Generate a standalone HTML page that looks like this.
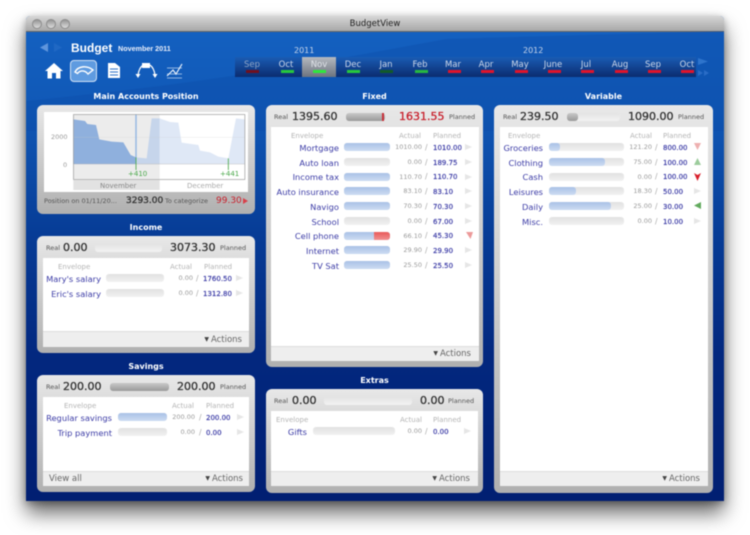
<!DOCTYPE html>
<html><head><meta charset="utf-8"><style>
html,body{margin:0;padding:0;background:#fff}
body{width:750px;height:535px;position:relative;overflow:hidden;font-family:"DejaVu Sans","Liberation Sans",sans-serif}
#all{position:absolute;left:0;top:0;width:750px;height:535px;filter:blur(.4px)}
.a,.a *{position:absolute;white-space:nowrap}
.win{left:26px;top:16px;width:698px;height:485px;box-shadow:0 12px 20px rgba(0,0,0,.6),0 2px 8px rgba(0,0,0,.3);border-radius:4px 4px 0 0;overflow:hidden;background:linear-gradient(180deg,#1562c2 0,#1058b6 20%,#073c96 45%,#03287f 70%,#011f72 100%)}
.tb{left:0;top:0;width:698px;height:15px;background:linear-gradient(#d6d6d6,#a8a8a8);border-bottom:1px solid #666}
.dot{width:10px;height:10px;border-radius:50%;background:linear-gradient(#969696,#dcdcdc);border:1px solid #8c8c8c;box-sizing:border-box;top:19px}
.ttl{left:0;width:750px;top:19px;text-align:center;font-size:8.5px;color:#222;line-height:11px}
.h{color:#fff;font-weight:bold;font-size:8px;line-height:11px;text-align:center}
.p{background:linear-gradient(#e8e8e8,#b0b0b0);border-radius:6px}
.w{background:#fff}
.bar{background:#eee;border-top:1px solid #ddd;color:#666;font-size:8.5px;line-height:14px}
.bar i{font-style:normal;font-size:6px;color:#444;line-height:14px}
.real{font-size:6.5px;color:#555;line-height:10px}
.big{font-size:11px;color:#333;line-height:14px;-webkit-text-stroke:.3px currentColor}
.prog{height:8px;border-radius:3px;background:linear-gradient(#e4e4e4,#f2f2f2)}
.dark{background:linear-gradient(#c8c8c8,#9a9a9a)}
.hd{font-size:7px;color:#b4b4b4;line-height:10px}
.r{height:0;left:0;width:750px}
.l{font-size:8.3px;line-height:11px;color:#3c3ca6;text-align:right;top:-4.500px}
.t{height:8px;top:-4px;border-radius:3px;background:linear-gradient(#e2e2e2,#f2f2f2)}
.f{height:8px;left:0;top:0;border-radius:3px;background:linear-gradient(#a9c1e6,#cddcf2)}
.v{font-size:6.500px;color:#999;line-height:10px;text-align:right;top:-5px;width:40px}
.s{font-size:7.500px;color:#aaa;line-height:10px;top:-4.500px}
.q{font-size:7px;color:#3c3ca6;line-height:10px;top:-4.500px;-webkit-text-stroke:.2px currentColor}
.g{width:0;height:0;top:-3px;border-left:7px solid #e6e6e6;border-top:3px solid transparent;border-bottom:3px solid transparent}
.m{font-size:8.500px;line-height:11px;color:#cdd8ea;width:34px;text-align:center;top:60px}
.mk{width:13px;height:3px;top:70px;background:#e0142a}
.fx .l{left:240px;width:99px}.fx .t{left:344px;width:46px}.fx .v{left:382px}.fx .s{left:425px}.fx .q{left:433px}.fx .g{left:465px}
.vr .l{left:470px;width:73px}.vr .t{left:549px;width:75px}.vr .v{left:612px}.vr .s{left:655px}.vr .q{left:663px}.vr .g{left:694px}
.in .l{left:30px;width:71px}.in .t{left:106px;width:58px}.in .v{left:153px}.in .s{left:196px}.in .q{left:203px}.in .g{left:236px}
.sv .l{left:30px;width:82px}.sv .t{left:118px;width:49px}.sv .v{left:155px}.sv .s{left:199px}.sv .q{left:206px}.sv .g{left:237px}
.ex .l{left:260px;width:47px}.ex .t{left:313px;width:82px}.ex .v{left:382px}.ex .s{left:425px}.ex .q{left:433px}.ex .g{left:464px}
</style></head><body><div id="all" class="a">
<div class="win"><div class="tb"></div>
<svg style="left:0;top:15px" width="698" height="100"><path d="M0 70 C200 50 300 30 420 8 L698 0 L698 100 L0 100Z" fill="#0b4aa6" opacity=".35"/></svg>
</div>
<div class="dot" style="left:32px"></div><div class="dot" style="left:46px"></div><div class="dot" style="left:60px"></div>
<div class="ttl">BudgetView</div>

<svg style="left:38px;top:42px" width="26" height="11"><path d="M2 5.500L10 1V10Z" fill="#5f95dc"/><path d="M24 5.500L16 1V10Z" fill="#2068c4"/></svg>
<div style="left:71px;top:41px;font-size:12px;font-weight:bold;color:#fff;line-height:14px;font-family:'Liberation Sans',sans-serif">Budget</div>
<div style="left:118px;top:44px;font-size:7.200px;font-weight:bold;color:#e8eefa;line-height:10px;font-family:'Liberation Sans',sans-serif">November 2011</div>

<svg style="left:40px;top:58px" width="160" height="26">
<path d="M5 13L14 5L23 13H20.500V20.500H16V15H12V20.500H7.500V13Z" fill="#fff"/>
<rect x="30.500" y="2.500" width="26" height="21" rx="3.500" fill="#5f9be0" stroke="#cfe0f5"/>
<path d="M35 14C38 8 47 7 53 12L48 16C45 12 40 12 37.500 15.500Z" fill="none" stroke="#fff" stroke-width="1.400"/>
<path d="M68 5H75L80 9V20H68Z" fill="#fff"/><path d="M70 11H78M70 14H78M70 17H78" stroke="#2a70c8" stroke-width="1"/>
<path d="M98 17Q99 10 103 7M110 7Q114 10 115 17" fill="none" stroke="#fff" stroke-width="1.200"/><rect x="102" y="5" width="8" height="5" fill="#fff"/><path d="M95.500 16h5l-2.500 4zM112.500 16h5l-2.500 4z" fill="#fff"/>
<path d="M127 20H142M127 10H142M127 16H142" stroke="#bcd2f0" stroke-width=".8"/><path d="M127 18L133 12L136 16L142 6" fill="none" stroke="#e6effa" stroke-width="1.200"/>
</svg>

<div style="left:294px;top:46px;font-size:8px;color:#c7d5ea;line-height:10px">2011</div>
<div style="left:523px;top:46px;font-size:8px;color:#c7d5ea;line-height:10px">2012</div>
<div style="left:235px;top:57px;width:461px;height:20px;background:linear-gradient(#1a5cb4,#0b2c70)"></div>
<div style="left:302px;top:57px;width:34px;height:20px;background:linear-gradient(#b5b9c0,#6d747f)"></div>
<div class="m" style="left:235px;color:#8fa5c6">Sep</div><div class="mk" style="left:246px;background:#70101f"></div>
<div class="m" style="left:269px">Oct</div><div class="mk" style="left:281px;background:#28c83c"></div>
<div class="m" style="left:302px;color:#dfe3e8">Nov</div><div class="mk" style="left:313px;background:#2ee83c"></div>
<div class="m" style="left:336px">Dec</div><div class="mk" style="left:347px;background:#28c83c"></div>
<div class="m" style="left:369px">Jan</div><div class="mk" style="left:380px;background:#125a28"></div>
<div class="m" style="left:403px">Feb</div><div class="mk" style="left:415px;background:#28b840"></div>
<div class="m" style="left:436px">Mar</div><div class="mk" style="left:448px"></div>
<div class="m" style="left:469px">Apr</div><div class="mk" style="left:481px"></div>
<div class="m" style="left:503px">May</div><div class="mk" style="left:515px"></div>
<div class="m" style="left:536px">June</div><div class="mk" style="left:548px"></div>
<div class="m" style="left:569px">Jul</div><div class="mk" style="left:581px"></div>
<div class="m" style="left:603px">Aug</div><div class="mk" style="left:615px"></div>
<div class="m" style="left:636px">Sep</div><div class="mk" style="left:648px"></div>
<div class="m" style="left:670px">Oct</div><div class="mk" style="left:681px"></div>
<svg style="left:698px;top:57px" width="14" height="20"><path d="M0 1L10 4.500L0 8Z" fill="#2e74cc"/><path d="M0 13L5 16L0 19ZM6 13L11 16L6 19Z" fill="#2a6cc6"/></svg>

<div class="h" style="left:37px;top:91px;width:218px">Main Accounts Position</div>
<div class="h" style="left:266px;top:91px;width:217px">Fixed</div>
<div class="h" style="left:494px;top:91px;width:219px">Variable</div>
<div class="h" style="left:37px;top:222px;width:218px">Income</div>
<div class="h" style="left:37px;top:361px;width:218px">Savings</div>
<div class="h" style="left:266px;top:375px;width:217px">Extras</div>

<!-- Main panel -->
<div class="p" style="left:37px;top:105px;width:218px;height:109px"></div>
<div class="w" style="left:44px;top:112px;width:204px;height:80px"></div>
<svg style="left:30px;top:100px" width="235" height="130" viewBox="0 0 705 390">
<rect x="130" y="240" width="259" height="30" fill="#e2e2e2"/>
<rect x="130" y="43" width="259" height="195" fill="#ececec"/>
<path d="M389 192V55L420 66L445 68L455 128L505 135L510 152L540 157L565 170L595 175L618 55L645 58V192Z" fill="#dfe8f6"/>
<path d="M318 192V172L350 175L365 55L389 55V192Z" fill="#c6d5eb"/>
<path d="M130 192V58L165 63L172 72L198 75L208 118L245 125L280 127L302 165L318 172V192Z" fill="#8fb0dd"/>
<path d="M130 112H645" stroke="#ccc" stroke-width="1" opacity=".6"/><path d="M130 192H645" stroke="#aaa" stroke-width="1"/>
<rect x="316" y="43" width="4" height="130" fill="#8fb4e2"/>
<rect x="130.500" y="43.500" width="514" height="195" fill="none" stroke="#999" stroke-width="2"/>
<path d="M318 172V210M595 175V210" stroke="#4aa84a" stroke-width="2.500"/>
</svg>
<div class="hd" style="left:51px;top:132px;color:#999;font-size:6.500px">2000</div><div class="hd" style="left:63px;top:160px;color:#999;font-size:6.500px">0</div>
<div style="left:128px;top:169px;font-size:7px;color:#4aa84a;line-height:10px">+410</div>
<div style="left:220px;top:169px;font-size:7px;color:#4aa84a;line-height:10px">+441</div>
<div style="left:100px;top:181px;font-size:7px;color:#888;line-height:10px">November</div>
<div style="left:187px;top:181px;font-size:7px;color:#aaa;line-height:10px">December</div>
<div style="left:44px;top:196px;font-size:6.500px;color:#555;line-height:10px">Position on 01/11/20...</div>
<div class="big" style="left:126px;top:195px;font-size:9px;line-height:12px">3293.00</div>
<div style="left:165px;top:196px;font-size:6.500px;color:#555;line-height:10px">To categorize</div>
<div style="left:216px;top:195px;font-size:9px;color:#c8202c;line-height:12px">99.30</div>
<svg style="left:243px;top:198px" width="6" height="6"><path d="M0 0L5 3L0 6Z" fill="#d8404a"/></svg>

<!-- Income -->
<div class="p" style="left:37px;top:236px;width:218px;height:117px"></div>
<div class="real" style="left:46px;top:243px">Real</div><div class="big" style="left:63px;top:241px">0.00</div>
<div class="prog" style="left:95px;top:244px;width:67px"></div>
<div class="big" style="left:170px;top:241px">3073.30</div><div class="real" style="left:220px;top:243px">Planned</div>
<div class="w" style="left:43px;top:258px;width:206px;height:88px"></div>
<div class="hd" style="left:58px;top:262px">Envelope</div><div class="hd" style="left:170px;top:262px">Actual</div><div class="hd" style="left:204px;top:262px">Planned</div>
<div class="in">
<div class="r" style="top:278px"><div class="l">Mary's salary</div><div class="t"></div><div class="v">0.00</div><div class="s">/</div><div class="q">1760.50</div><div class="g"></div></div>
<div class="r" style="top:293px"><div class="l">Eric's salary</div><div class="t"></div><div class="v">0.00</div><div class="s">/</div><div class="q">1312.80</div><div class="g"></div></div>
</div>
<div class="bar" style="left:43px;top:331px;width:206px;height:15px"><i style="right:40px;top:1px">▼</i><span style="right:7px;top:1px">Actions</span></div>

<!-- Savings -->
<div class="p" style="left:37px;top:375px;width:218px;height:117px"></div>
<div class="real" style="left:46px;top:382px">Real</div><div class="big" style="left:63px;top:380px">200.00</div>
<div class="prog dark" style="left:110px;top:383px;width:59px"></div>
<div class="big" style="left:177px;top:380px">200.00</div><div class="real" style="left:220px;top:382px">Planned</div>
<div class="w" style="left:43px;top:397px;width:206px;height:88px"></div>
<div class="hd" style="left:64px;top:401px">Envelope</div><div class="hd" style="left:172px;top:401px">Actual</div><div class="hd" style="left:206px;top:401px">Planned</div>
<div class="sv">
<div class="r" style="top:417px"><div class="l">Regular savings</div><div class="t"><div class="f" style="width:49px"></div></div><div class="v">200.00</div><div class="s">/</div><div class="q">200.00</div><div class="g"></div></div>
<div class="r" style="top:432px"><div class="l">Trip payment</div><div class="t"></div><div class="v">0.00</div><div class="s">/</div><div class="q">0.00</div><div class="g"></div></div>
</div>
<div class="bar" style="left:43px;top:471px;width:206px;height:14px"><span style="left:6px;top:0">View all</span><i style="right:39px;top:0">▼</i><span style="right:6px;top:0">Actions</span></div>

<!-- Fixed -->
<div class="p" style="left:266px;top:105px;width:217px;height:262px"></div>
<div class="real" style="left:274px;top:112px">Real</div><div class="big" style="left:292px;top:110px">1395.60</div>
<div class="prog dark" style="left:346px;top:113px;width:39px"><div style="right:1px;top:0;width:2px;height:8px;background:#c8303a"></div></div>
<div class="big" style="left:399px;top:110px;color:#c81e2a">1631.55</div><div class="real" style="left:449px;top:112px">Planned</div>
<div class="w" style="left:271px;top:127px;width:208px;height:233px"></div>
<div class="hd" style="left:291px;top:131px">Envelope</div><div class="hd" style="left:399px;top:131px">Actual</div><div class="hd" style="left:433px;top:131px">Planned</div>
<div class="fx">
<div class="r" style="top:147px"><div class="l">Mortgage</div><div class="t"><div class="f" style="width:46px"></div></div><div class="v">1010.00</div><div class="s">/</div><div class="q">1010.00</div><div class="g"></div></div>
<div class="r" style="top:162px"><div class="l">Auto loan</div><div class="t"></div><div class="v">0.00</div><div class="s">/</div><div class="q">189.75</div><div class="g"></div></div>
<div class="r" style="top:176.500px"><div class="l">Income tax</div><div class="t"><div class="f" style="width:46px"></div></div><div class="v">110.70</div><div class="s">/</div><div class="q">110.70</div><div class="g"></div></div>
<div class="r" style="top:191px"><div class="l">Auto insurance</div><div class="t"><div class="f" style="width:46px"></div></div><div class="v">83.10</div><div class="s">/</div><div class="q">83.10</div><div class="g"></div></div>
<div class="r" style="top:206px"><div class="l">Navigo</div><div class="t"><div class="f" style="width:46px"></div></div><div class="v">70.30</div><div class="s">/</div><div class="q">70.30</div><div class="g"></div></div>
<div class="r" style="top:221px"><div class="l">School</div><div class="t"></div><div class="v">0.00</div><div class="s">/</div><div class="q">67.00</div><div class="g"></div></div>
<div class="r" style="top:235.500px"><div class="l">Cell phone</div><div class="t"><div class="f" style="width:46px"></div><div style="left:30px;top:0;width:16px;height:8px;border-radius:0 3px 3px 0;background:linear-gradient(#e85a5a,#f09090)"></div></div><div class="v">66.10</div><div class="s">/</div><div class="q">45.30</div><svg style="left:466px;top:-4px" width="7" height="7"><path d="M0 0H7L4.500 7Z" fill="#ec9a9a"/></svg></div>
<div class="r" style="top:250px"><div class="l">Internet</div><div class="t"><div class="f" style="width:46px"></div></div><div class="v">29.90</div><div class="s">/</div><div class="q">29.90</div><div class="g"></div></div>
<div class="r" style="top:265px"><div class="l">TV Sat</div><div class="t"><div class="f" style="width:46px"></div></div><div class="v">25.50</div><div class="s">/</div><div class="q">25.50</div><div class="g"></div></div>
</div>
<div class="bar" style="left:271px;top:346px;width:208px;height:14px"><i style="right:41px;top:0">▼</i><span style="right:8px;top:0">Actions</span></div>

<!-- Extras -->
<div class="p" style="left:266px;top:389px;width:217px;height:104px"></div>
<div class="real" style="left:274px;top:396px">Real</div><div class="big" style="left:292px;top:394px">0.00</div>
<div class="prog" style="left:324px;top:397px;width:88px"></div>
<div class="big" style="left:420px;top:394px">0.00</div><div class="real" style="left:448px;top:396px">Planned</div>
<div class="w" style="left:271px;top:411px;width:207px;height:75px"></div>
<div class="hd" style="left:276px;top:415px">Envelope</div><div class="hd" style="left:400px;top:415px">Actual</div><div class="hd" style="left:433px;top:415px">Planned</div>
<div class="ex">
<div class="r" style="top:431px"><div class="l">Gifts</div><div class="t"></div><div class="v">0.00</div><div class="s">/</div><div class="q">0.00</div><div class="g"></div></div>
</div>
<div class="bar" style="left:271px;top:471px;width:207px;height:14px"><i style="right:41px;top:0">▼</i><span style="right:8px;top:0">Actions</span></div>

<!-- Variable -->
<div class="p" style="left:494px;top:105px;width:219px;height:388px"></div>
<div class="real" style="left:503px;top:112px">Real</div><div class="big" style="left:520px;top:110px">239.50</div>
<div class="prog" style="left:567px;top:113px;width:53px"><div class="dark" style="left:0;top:0;width:11px;height:8px;border-radius:3px"></div></div>
<div class="big" style="left:628px;top:110px">1090.00</div><div class="real" style="left:678px;top:112px">Planned</div>
<div class="w" style="left:500px;top:127px;width:208px;height:359px"></div>
<div class="hd" style="left:508px;top:131px">Envelope</div><div class="hd" style="left:630px;top:131px">Actual</div><div class="hd" style="left:663px;top:131px">Planned</div>
<div class="vr">
<div class="r" style="top:147px"><div class="l">Groceries</div><div class="t"><div class="f" style="width:11px"></div></div><div class="v">121.20</div><div class="s">/</div><div class="q">800.00</div><svg style="left:694px;top:-4px" width="7" height="7"><path d="M0 0H7L3.500 7Z" fill="#eeb0b0"/></svg></div>
<div class="r" style="top:162px"><div class="l">Clothing</div><div class="t"><div class="f" style="width:56px"></div></div><div class="v">75.00</div><div class="s">/</div><div class="q">100.00</div><svg style="left:694px;top:-4px" width="7" height="7"><path d="M3.500 0L7 7H0Z" fill="#9ccc9c"/></svg></div>
<div class="r" style="top:176.500px"><div class="l">Cash</div><div class="t"></div><div class="v">0.00</div><div class="s">/</div><div class="q">100.00</div><svg style="left:694px;top:-4px" width="7" height="8"><path d="M0 0L3.500 2L7 0L3.500 8Z" fill="#d81e2a"/></svg></div>
<div class="r" style="top:191px"><div class="l">Leisures</div><div class="t"><div class="f" style="width:27px"></div></div><div class="v">18.30</div><div class="s">/</div><div class="q">50.00</div><div class="g"></div></div>
<div class="r" style="top:206px"><div class="l">Daily</div><div class="t"><div class="f" style="width:62px"></div></div><div class="v">25.00</div><div class="s">/</div><div class="q">30.00</div><svg style="left:694px;top:-4px" width="7" height="7"><path d="M0 3.500L7 0V7Z" fill="#62aa5e"/></svg></div>
<div class="r" style="top:221px"><div class="l">Misc.</div><div class="t"></div><div class="v">0.00</div><div class="s">/</div><div class="q">10.00</div><div class="g"></div></div>
</div>
<div class="bar" style="left:500px;top:471px;width:208px;height:14px"><i style="right:41px;top:0">▼</i><span style="right:8px;top:0">Actions</span></div>
</div></body></html>
